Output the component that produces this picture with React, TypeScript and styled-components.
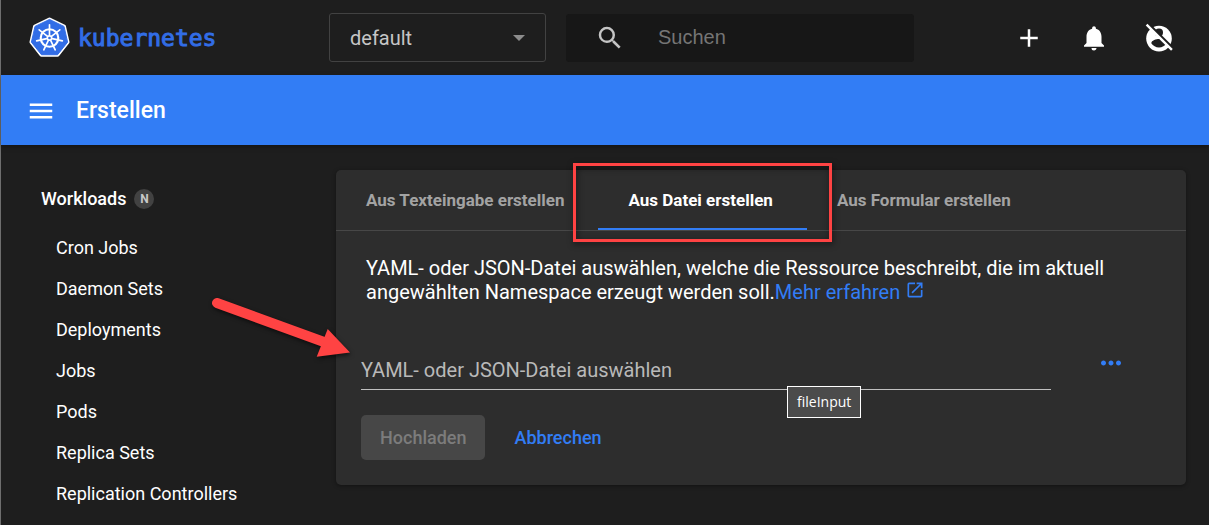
import React from 'react';
import styled, { createGlobalStyle } from 'styled-components';
import {
  MdAdd,
  MdMenu,
  MdMoreHoriz,
  MdNotifications,
  MdOpenInNew,
  MdSearch,
} from 'react-icons/md';

const color = {
  page: '#1e1e1e',
  card: '#2d2d2d',
  field: '#171717',
  line: '#474747',
  primary: '#327df5',
  logo: '#326de6',
  mark: '#ff4343',
  muted: '#a3a3a3',
};

const GlobalStyle = createGlobalStyle`
  *, *::before, *::after { box-sizing: border-box; }
  html { background: ${color.page}; }
  body {
    margin: 0;
    color: #fff;
    font-family: Roboto, "Liberation Sans", sans-serif;
    font-size: 18px;
    overflow: hidden;
  }
  button, input, select { font: inherit; color: inherit; }
  button { cursor: pointer; }
`;

const Page = styled.div`
  display: flex;
  flex-direction: column;
  min-height: 100vh;
  border-left: 1px solid #6e6e6e;
`;

const TopBar = styled.header`
  display: flex;
  align-items: center;
  height: 75px;
  padding: 0 25px 0 28px;
`;

const LogoLink = styled.a`
  display: flex;
  align-items: center;
  flex: 0 0 300px;
  gap: 8px;
  color: ${color.logo};
  font-family: "DejaVu Sans Mono", monospace;
  font-size: 23px;
  line-height: 28px;
  text-decoration: none;
  -webkit-text-stroke: 1px ${color.logo};
`;

const NamespaceBox = styled.div`
  position: relative;
  flex: 0 0 217px;
`;

const NamespaceSelect = styled.select`
  appearance: none;
  display: block;
  width: 100%;
  height: 49px;
  padding: 0 20px;
  border: 1px solid #424242;
  border-radius: 3px;
  background: transparent;
  color: #c6c6c6;
  font-size: 20px;
`;

const SelectArrow = styled.svg`
  position: absolute;
  top: 22px;
  right: 21px;
  pointer-events: none;
`;

const SearchBox = styled.label`
  display: flex;
  align-items: center;
  flex: 1;
  min-width: 0;
  height: 48px;
  margin: 0 90px 0 20px;
  padding-left: 29px;
  gap: 33px;
  border-radius: 3px;
  background: ${color.field};
  color: #c4c4c4;
  svg { flex: none; }
`;

const SearchInput = styled.input`
  flex: 1;
  min-width: 0;
  padding: 0;
  border: 0;
  outline: 0;
  background: transparent;
  font-family: "Liberation Sans", Arial, sans-serif;
  font-size: 20px;
  &::placeholder { color: #757575; opacity: 1; }
`;

const Actions = styled.div`
  display: flex;
  gap: 15px;
`;

const IconButton = styled.button<{ $width?: number }>`
  display: flex;
  align-items: center;
  justify-content: center;
  width: ${({ $width = 50 }) => $width}px;
  height: 46px;
  padding: 0;
  border: 0;
  background: transparent;
`;

const TitleBar = styled.div`
  display: flex;
  align-items: center;
  height: 70px;
  padding: 2px 15px 0;
  gap: 10px;
  background: ${color.primary};
  box-shadow: 0 2px 5px rgba(0, 0, 0, 0.35);
`;

const Title = styled.h1`
  margin: 0;
  font-size: 23px;
  font-weight: 500;
  line-height: 30px;
`;

const Body = styled.div`
  display: flex;
  flex: 1;
`;

const Sidebar = styled.nav`
  flex: 0 0 310px;
  padding: 33px 0 0 40px;
`;

const Group = styled.a`
  display: flex;
  align-items: center;
  gap: 8px;
  height: 41px;
  color: inherit;
  font-weight: 500;
  text-decoration: none;
`;

const Badge = styled.span`
  width: 20px;
  height: 20px;
  border-radius: 50%;
  background: #424242;
  color: #c8c8c8;
  font-size: 12px;
  font-weight: 700;
  line-height: 20px;
  text-align: center;
`;

const NavList = styled.ul`
  margin: 8px 0 0;
  padding: 0 0 0 15px;
  list-style: none;
`;

const NavItem = styled.a`
  display: block;
  color: inherit;
  line-height: 41px;
  text-decoration: none;
`;

const Main = styled.main`
  flex: 1;
  min-width: 0;
  padding: 25px 23px 25px 25px;
`;

const Card = styled.section`
  position: relative;
  border-radius: 5px;
  background: ${color.card};
  box-shadow: 0 1px 4px rgba(0, 0, 0, 0.4);
`;

const Tabs = styled.div`
  display: flex;
  border-bottom: 1px solid ${color.line};
`;

const Tab = styled.button<{ $active?: boolean }>`
  position: relative;
  height: 60px;
  padding: 2px 34px 0 30px;
  border: 0;
  border-bottom: 2px solid ${({ $active }) => ($active ? color.primary : 'transparent')};
  background: transparent;
  color: ${({ $active }) => ($active ? '#fff' : color.muted)};
  font-size: 17px;
  font-weight: 700;
  white-space: nowrap;
`;

const Highlight = styled.span`
  position: absolute;
  inset: -7px -25px -14px -25px;
  border: 3px solid ${color.mark};
  filter: drop-shadow(1px 2px 3px rgba(0, 0, 0, 0.6));
`;

const Description = styled.p`
  margin: 0;
  padding: 25px 30px 0;
  font-size: 20px;
  line-height: 24px;
`;

const MoreLink = styled.a`
  color: ${color.primary};
  text-decoration: none;
  svg { vertical-align: -1px; }
`;

const Form = styled.form`
  padding: 36px 35px 25px 25px;
`;

const FileRow = styled.div`
  display: flex;
  height: 50px;
  gap: 20px;
  color: ${color.primary};
`;

const FileField = styled.div`
  position: relative;
  display: flex;
  align-items: flex-end;
  flex: 1;
`;

const FileInput = styled.input`
  width: 100%;
  height: 40px;
  padding: 0;
  border: 0;
  border-bottom: 1px solid #c0c0c0;
  border-radius: 0;
  outline: 0;
  background: transparent;
  font-size: 20px;
  &::placeholder { color: #b9b9b9; opacity: 1; }
`;

const Tooltip = styled.span`
  position: absolute;
  top: 46px;
  left: 426px;
  padding: 5px 9px;
  border: 1px solid #fff;
  background: #4b4b4b;
  color: #fff;
  font-family: "Open Sans", "Noto Sans", sans-serif;
  font-size: 14px;
  line-height: 20px;
`;

const Buttons = styled.div`
  display: flex;
  margin-top: 25px;
  gap: 10px;
`;

const FormButton = styled.button<{ $filled?: boolean }>`
  height: 45px;
  padding: 0 19px;
  border: 0;
  border-radius: 5px;
  background: ${({ $filled }) => ($filled ? '#474747' : 'transparent')};
  color: ${({ $filled }) => ($filled ? '#7c7c7c' : color.primary)};
  font-weight: 500;
`;

const Pointer = styled.svg`
  position: absolute;
  top: 122px;
  left: -130px;
  pointer-events: none;
  filter: drop-shadow(1px 2px 2px rgba(0, 0, 0, 0.6));
`;

const polar = (r: number, i: number, n: number) => {
  const a = (i / n) * 2 * Math.PI - Math.PI / 2;
  return [21 + r * Math.cos(a), 21 + r * Math.sin(a)];
};

const heptagon = Array.from({ length: 7 }, (_, i) => polar(19, i, 7).join(',')).join(' ');

function KubernetesLogo() {
  return (
    <svg width="41" height="42" viewBox="0 0 42 42" aria-hidden="true">
      <polygon points={heptagon} fill="#fff" stroke="#fff" strokeWidth="4" strokeLinejoin="round" />
      <polygon points={heptagon} fill={color.logo} stroke={color.logo} strokeWidth="1" strokeLinejoin="round" />
      <g stroke="#fff" fill="none" strokeLinecap="round">
        <circle cx="21" cy="21" r="9" strokeWidth="2.2" />
        {Array.from({ length: 7 }, (_, i) => {
          const [x1, y1] = polar(3, i, 7);
          const [x2, y2] = polar(13.5, i, 7);
          return <line key={i} x1={x1} y1={y1} x2={x2} y2={y2} strokeWidth="1.7" />;
        })}
        <circle cx="21" cy="21" r="2.2" strokeWidth="1.6" />
      </g>
    </svg>
  );
}

function UserOffIcon() {
  return (
    <svg width="30" height="30" viewBox="0 0 30 30" aria-hidden="true">
      <circle cx="15" cy="15.6" r="12.8" fill="#fff" />
      <circle cx="15" cy="9.6" r="4" fill={color.page} />
      <path d="M7.3 20.2c0-2.8 5.1-4.2 7.7-4.2s7.7 1.4 7.7 4.2c-1.7 2.5-4.5 4.2-7.7 4.2s-6-1.7-7.7-4.2z" fill={color.page} />
      <path d="M4.2 .8 29.4 26" stroke={color.page} strokeWidth="3" />
      <path d="M2.6 1.6 27.9 26.9" stroke="#fff" strokeWidth="2.4" />
    </svg>
  );
}

const workloads = [
  'Cron Jobs',
  'Daemon Sets',
  'Deployments',
  'Jobs',
  'Pods',
  'Replica Sets',
  'Replication Controllers',
];

export default function App() {
  return (
    <>
      <GlobalStyle />
      <Page>
        <TopBar>
          <LogoLink href="#">
            <KubernetesLogo />
            kubernetes
          </LogoLink>
          <NamespaceBox>
            <NamespaceSelect aria-label="Namespace" defaultValue="default">
              <option value="default">default</option>
            </NamespaceSelect>
            <SelectArrow width="12" height="6" viewBox="0 0 12 6" aria-hidden="true">
              <path d="M0 0h12L6 6z" fill="#8c8c8c" />
            </SelectArrow>
          </NamespaceBox>
          <SearchBox>
            <MdSearch size={30} />
            <SearchInput type="text" placeholder="Suchen" aria-label="Suchen" />
          </SearchBox>
          <Actions>
            <IconButton type="button" aria-label="Erstellen"><MdAdd size={30} /></IconButton>
            <IconButton type="button" aria-label="Benachrichtigungen"><MdNotifications size={30} /></IconButton>
            <IconButton type="button" aria-label="Benutzer"><UserOffIcon /></IconButton>
          </Actions>
        </TopBar>
        <TitleBar>
          <IconButton type="button" aria-label="Menü"><MdMenu size={30} /></IconButton>
          <Title>Erstellen</Title>
        </TitleBar>
        <Body>
          <Sidebar>
            <Group href="#workloads">
              Workloads
              <Badge>N</Badge>
            </Group>
            <NavList>
              {workloads.map((name) => (
                <li key={name}><NavItem href="#">{name}</NavItem></li>
              ))}
            </NavList>
          </Sidebar>
          <Main>
            <Card>
              <Tabs role="tablist">
                <Tab type="button" role="tab" aria-selected={false}>Aus Texteingabe erstellen</Tab>
                <Tab type="button" role="tab" aria-selected $active>
                  Aus Datei erstellen
                  <Highlight />
                </Tab>
                <Tab type="button" role="tab" aria-selected={false}>Aus Formular erstellen</Tab>
              </Tabs>
              <Description>
                YAML- oder JSON-Datei auswählen, welche die Ressource beschreibt, die im aktuell
                angewählten Namespace erzeugt werden soll.
                <MoreLink href="#">Mehr erfahren <MdOpenInNew size={20} /></MoreLink>
              </Description>
              <Form onSubmit={(e) => e.preventDefault()}>
                <FileRow>
                  <FileField>
                    <FileInput
                      type="text"
                      readOnly
                      placeholder="YAML- oder JSON-Datei auswählen"
                      aria-label="YAML- oder JSON-Datei auswählen"
                    />
                    <Tooltip role="tooltip">fileInput</Tooltip>
                  </FileField>
                  <IconButton type="button" $width={80} aria-label="Datei auswählen">
                    <MdMoreHoriz size={30} />
                  </IconButton>
                </FileRow>
                <Buttons>
                  <FormButton type="submit" $filled disabled>Hochladen</FormButton>
                  <FormButton type="button">Abbrechen</FormButton>
                </Buttons>
              </Form>
              <Pointer width="150" height="76" viewBox="206 292 150 76" aria-hidden="true">
                <path d="M217 303 324 342" stroke={color.mark} strokeWidth="10" strokeLinecap="round" />
                <path d="M350 352.5 327.7 329 316.7 356.7z" fill={color.mark} />
              </Pointer>
            </Card>
          </Main>
        </Body>
      </Page>
    </>
  );
}
